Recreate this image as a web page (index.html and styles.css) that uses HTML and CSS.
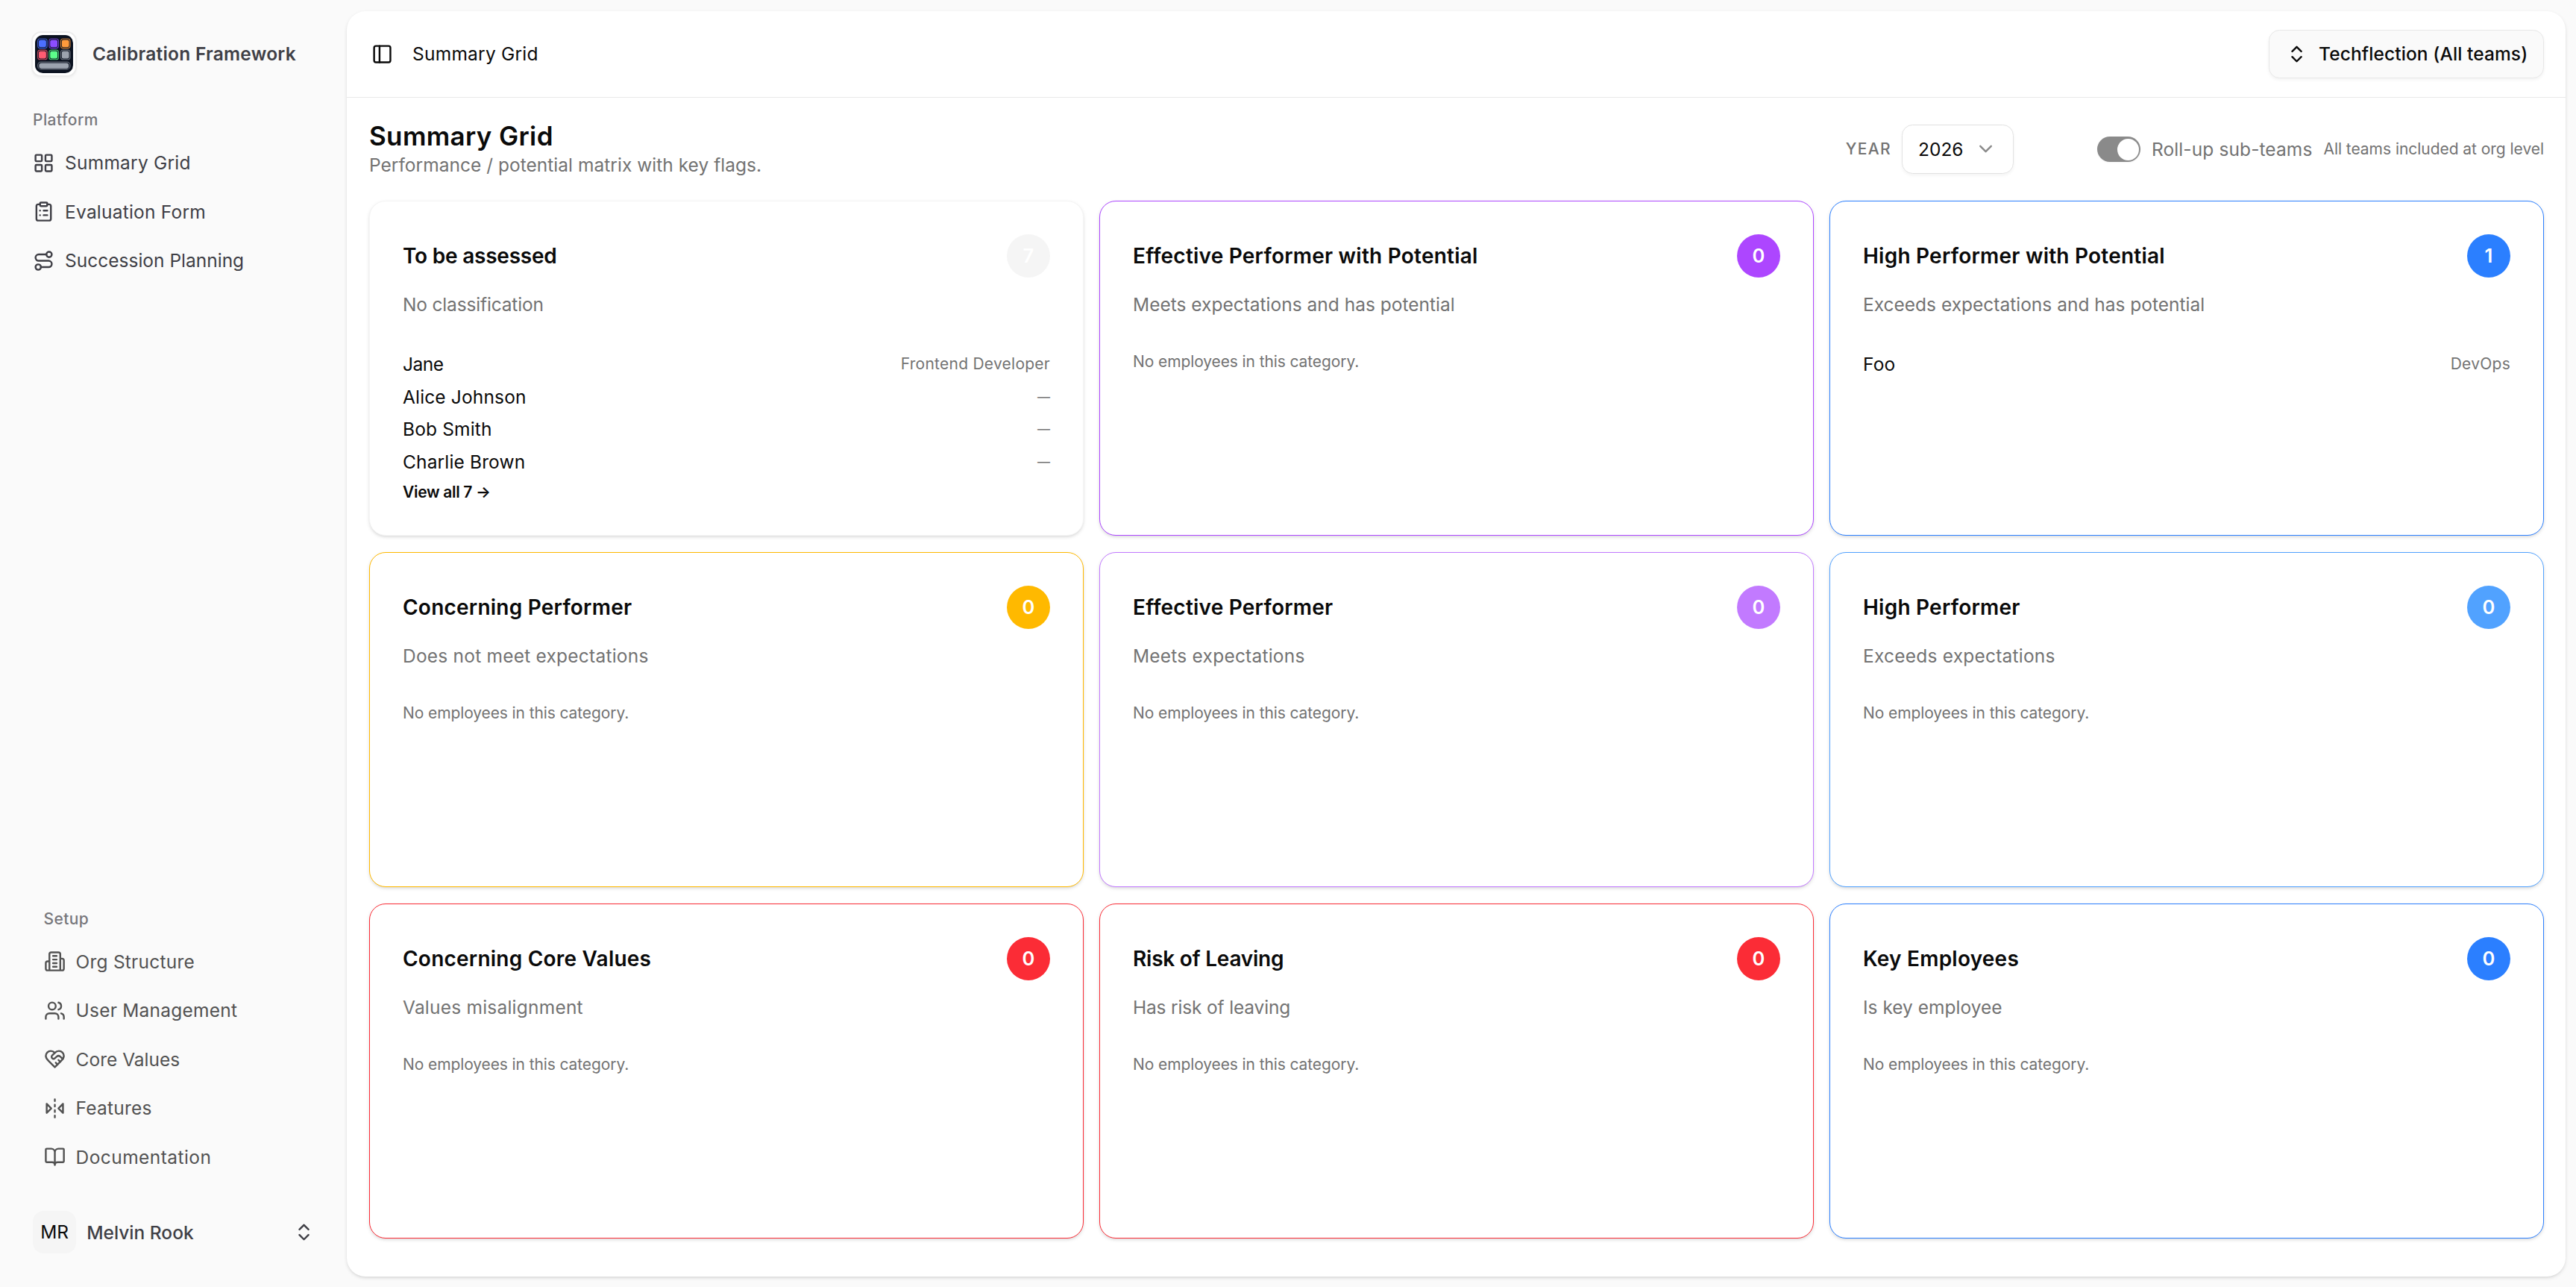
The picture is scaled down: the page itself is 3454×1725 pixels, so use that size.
FILE: index.html
```html
<!DOCTYPE html>
<html lang="en">
<head>
<meta charset="utf-8">
<title>Summary Grid</title>
<link rel="stylesheet" href="styles.css">
</head>
<body>
<div class="app">
  <aside class="sidebar">
    <div class="brand">
      <span class="brand-logo">
        <svg viewBox="0 0 154 154">
          <rect width="154" height="154" rx="32" fill="#0b1220"/>
          <g stroke-width="3.5">
            <g fill="#4c6fff" stroke="#4c6fff"><rect x="11" y="15" width="38" height="38" rx="10" fill="#0b1220" stroke-opacity=".75"/><rect x="17" y="21" width="26" height="26" rx="5"/></g>
            <g fill="#8b4dff" stroke="#8b4dff"><rect x="57" y="15" width="38" height="38" rx="10" fill="#0b1220" stroke-opacity=".75"/><rect x="63" y="21" width="26" height="26" rx="5"/></g>
            <g fill="#ff9a3c" stroke="#ff9a3c"><rect x="104" y="15" width="38" height="38" rx="10" fill="#0b1220" stroke-opacity=".75"/><rect x="110" y="21" width="26" height="26" rx="5"/></g>
            <g fill="#ff5c72" stroke="#ff5c72"><rect x="11" y="61" width="38" height="38" rx="10" fill="#0b1220" stroke-opacity=".75"/><rect x="17" y="67" width="26" height="26" rx="5"/></g>
            <g fill="#5cff8a" stroke="#5cff8a"><rect x="57" y="61" width="38" height="38" rx="10" fill="#0b1220" stroke-opacity=".75"/><rect x="63" y="67" width="26" height="26" rx="5"/></g>
            <g fill="#9ca3af" stroke="#9ca3af"><rect x="104" y="61" width="38" height="38" rx="10" fill="#0b1220" stroke-opacity=".6"/><rect x="110" y="67" width="26" height="26" rx="5"/></g>
            <g fill="#9ca3af" stroke="#9ca3af"><rect x="11" y="109" width="131" height="29" rx="13" fill="#0b1220" stroke-opacity=".6"/><rect x="18" y="115" width="117" height="18" rx="8"/></g>
          </g>
        </svg>
      </span>
      <span class="brand-name">Calibration Framework</span>
    </div>

    <nav class="nav nav-platform">
      <div class="nav-label">Platform</div>
      <a class="nav-item"><svg class="icon" viewBox="0 0 24 24"><rect width="7" height="7" x="3" y="3" rx="1"/><rect width="7" height="7" x="14" y="3" rx="1"/><rect width="7" height="7" x="14" y="14" rx="1"/><rect width="7" height="7" x="3" y="14" rx="1"/></svg>Summary Grid</a>
      <a class="nav-item"><svg class="icon" viewBox="0 0 24 24"><rect width="8" height="4" x="8" y="2" rx="1"/><path d="M16 4h2a2 2 0 0 1 2 2v14a2 2 0 0 1-2 2H6a2 2 0 0 1-2-2V6a2 2 0 0 1 2-2h2M12 11h4M12 16h4M8 11h.01M8 16h.01"/></svg>Evaluation Form</a>
      <a class="nav-item snug"><svg class="icon" viewBox="0 0 24 24"><circle cx="6" cy="19" r="3"/><path d="M9 19h8.5a3.5 3.5 0 0 0 0-7h-11a3.5 3.5 0 0 1 0-7H15"/><circle cx="18" cy="5" r="3"/></svg>Succession Planning</a>
    </nav>

    <nav class="nav nav-setup">
      <div class="nav-label">Setup</div>
      <a class="nav-item"><svg class="icon" viewBox="0 0 24 24"><path d="M6 22V4a2 2 0 0 1 2-2h8a2 2 0 0 1 2 2v18ZM6 12H4a2 2 0 0 0-2 2v6a2 2 0 0 0 2 2h2M18 9h2a2 2 0 0 1 2 2v9a2 2 0 0 1-2 2h-2M10 6h4M10 10h4M10 14h4M10 18h4"/></svg>Org Structure</a>
      <a class="nav-item"><svg class="icon" viewBox="0 0 24 24"><path d="M16 21v-2a4 4 0 0 0-4-4H6a4 4 0 0 0-4 4v2"/><circle cx="9" cy="7" r="4"/><path d="M22 21v-2a4 4 0 0 0-3-3.87M16 3.13a4 4 0 0 1 0 7.75"/></svg>User Management</a>
      <a class="nav-item snug"><svg class="icon" viewBox="0 0 24 24"><path d="M19 14c1.49-1.46 3-3.21 3-5.5A5.5 5.5 0 0 0 16.5 3c-1.76 0-3 .5-4.5 2-1.5-1.5-2.74-2-4.5-2A5.5 5.5 0 0 0 2 8.5c0 2.3 1.5 4.05 3 5.5l7 7Z"/><path d="M12 5 9.04 7.96a2.17 2.17 0 0 0 0 3.08c.82.82 2.13.85 3 .07l2.07-1.9a2.82 2.82 0 0 1 3.79 0l2.96 2.66M18 15l-2-2M15 18l-2-2"/></svg>Core Values</a>
      <a class="nav-item"><svg class="icon" viewBox="0 0 24 24"><path d="m3 7 5 5-5 5V7M21 7l-5 5 5 5V7M12 20v2M12 14v2M12 8v2M12 2v2"/></svg>Features</a>
      <a class="nav-item loose"><svg class="icon" viewBox="0 0 24 24"><path d="M12 7v14M3 18a1 1 0 0 1-1-1V4a1 1 0 0 1 1-1h5a4 4 0 0 1 4 4 4 4 0 0 1 4-4h5a1 1 0 0 1 1 1v13a1 1 0 0 1-1 1h-6a3 3 0 0 0-3 3 3 3 0 0 0-3-3z"/></svg>Documentation</a>
    </nav>

    <div class="user">
      <span class="avatar">MR</span>
      <span class="user-name">Melvin Rook</span>
      <svg class="icon" viewBox="0 0 24 24"><path d="m7 15 5 5 5-5M7 9l5-5 5 5"/></svg>
    </div>
  </aside>

  <main class="main">
    <header class="topbar">
      <svg class="icon" viewBox="0 0 24 24"><rect width="18" height="18" x="3" y="3" rx="2"/><path d="M9 3v18"/></svg>
      <span class="crumb">Summary Grid</span>
      <button class="team-button"><svg class="icon" viewBox="0 0 24 24"><path d="m7 15 5 5 5-5M7 9l5-5 5 5"/></svg>Techflection (All teams)</button>
    </header>

    <div class="page">
      <div class="page-head">
        <div class="heading">
          <h1>Summary Grid</h1>
          <p>Performance / potential matrix with key flags.</p>
        </div>
        <div class="filters">
          <span class="year-label">YEAR</span>
          <div class="select">2026<svg class="icon" viewBox="0 0 24 24"><path d="m6 9 6 6 6-6"/></svg></div>
          <div class="rollup">
            <span class="switch"><span class="thumb"></span></span>
            <span class="rollup-label">Roll-up sub-teams</span>
            <span class="rollup-note">All teams included at org level</span>
          </div>
        </div>
      </div>

      <div class="grid">
        <section class="card neutral">
          <div class="card-head"><h2 class="tight">To be assessed</h2><span class="badge">7</span></div>
          <p class="desc tight">No classification</p>
          <ul class="people">
            <li><span class="tight">Jane</span><span class="role">Frontend Developer</span></li>
            <li><span>Alice Johnson</span><span class="role none">—</span></li>
            <li><span>Bob Smith</span><span class="role none">—</span></li>
            <li><span>Charlie Brown</span><span class="role none">—</span></li>
          </ul>
          <a class="view-all">View all 7 →</a>
        </section>
        <section class="card purple">
          <div class="card-head"><h2>Effective Performer with Potential</h2><span class="badge">0</span></div>
          <p class="desc">Meets expectations and has potential</p>
          <p class="empty">No employees in this category.</p>
        </section>
        <section class="card blue">
          <div class="card-head"><h2>High Performer with Potential</h2><span class="badge">1</span></div>
          <p class="desc">Exceeds expectations and has potential</p>
          <ul class="people">
            <li><span>Foo</span><span class="role">DevOps</span></li>
          </ul>
        </section>
        <section class="card amber">
          <div class="card-head"><h2>Concerning Performer</h2><span class="badge">0</span></div>
          <p class="desc loose">Does not meet expectations</p>
          <p class="empty">No employees in this category.</p>
        </section>
        <section class="card light-purple">
          <div class="card-head"><h2>Effective Performer</h2><span class="badge">0</span></div>
          <p class="desc loose">Meets expectations</p>
          <p class="empty">No employees in this category.</p>
        </section>
        <section class="card light-blue">
          <div class="card-head"><h2>High Performer</h2><span class="badge">0</span></div>
          <p class="desc loose">Exceeds expectations</p>
          <p class="empty">No employees in this category.</p>
        </section>
        <section class="card red">
          <div class="card-head"><h2>Concerning Core Values</h2><span class="badge">0</span></div>
          <p class="desc loose">Values misalignment</p>
          <p class="empty">No employees in this category.</p>
        </section>
        <section class="card red">
          <div class="card-head"><h2 class="tight">Risk of Leaving</h2><span class="badge">0</span></div>
          <p class="desc tight">Has risk of leaving</p>
          <p class="empty">No employees in this category.</p>
        </section>
        <section class="card blue">
          <div class="card-head"><h2>Key Employees</h2><span class="badge">0</span></div>
          <p class="desc">Is key employee</p>
          <p class="empty">No employees in this category.</p>
        </section>
      </div>
    </div>
  </main>
</div>
</body>
</html>
```
FILE: styles.css
```css
* { box-sizing: border-box; margin: 0; padding: 0; }

html { font-size: 29.09px; }

body {
  background: #fafafa;
  color: #0a0a0a;
  font-family: Inter, "Liberation Sans", sans-serif;
  font-size: 24.5px;
  line-height: 36.4px;
  letter-spacing: 0.006em;
}

.app { display: flex; height: 100vh; overflow: hidden; }

.icon {
  width: 1rem;
  height: 1rem;
  flex: none;
  fill: none;
  stroke: currentColor;
  stroke-width: 2;
  stroke-linecap: round;
  stroke-linejoin: round;
}

/* Sidebar */
.sidebar {
  width: 465px;
  flex: none;
  display: flex;
  flex-direction: column;
  padding: 42px 0 44px 44px;
  color: #3f3f46;
}

.brand { display: flex; align-items: center; gap: 21px; margin-left: -2px; height: 61px; }
.brand-logo {
  width: 61px;
  height: 61px;
  padding: 3px;
  border: 2px solid #ececec;
  border-radius: 13px;
  background: #fff;
  box-shadow: 0 2px 3px rgba(0, 0, 0, 0.04);
}
.brand-logo svg { display: block; width: 51px; height: 51px; }
.brand-name { font-weight: 600; letter-spacing: 0.01em; line-height: 58px; padding-bottom: 2px; }

.nav { display: flex; flex-direction: column; gap: 7.27px; }
.nav-label {
  height: 58.2px;
  margin-bottom: -7.27px;
  line-height: 60.5px;
  font-size: 21px;
  font-weight: 500;
  letter-spacing: 0.02em;
  color: #77777c;
}
.nav-item { display: flex; align-items: center; gap: 14px; height: 58.2px; letter-spacing: 0.009em; }
.nav-item.snug { letter-spacing: 0; }
.nav-item.loose { letter-spacing: 0.018em; }
.nav-platform { margin-top: 28px; }
.nav-setup { margin-top: auto; padding-left: 14.5px; }
.nav-setup .nav-item { color: #525252; }

.user { display: flex; align-items: center; margin-top: 43px; height: 58.2px; padding-right: 42.5px; }
.avatar {
  width: 58.2px;
  height: 57px;
  border-radius: 14.5px;
  background: #f5f5f5;
  color: #0a0a0a;
  text-align: center;
  line-height: 57px;
  letter-spacing: 0;
}
.user-name { margin: 0 auto 0 14px; font-weight: 500; letter-spacing: 0; }

/* Content shell */
.main {
  flex: 1;
  margin: 15px 14px 14px 0;
  border-radius: 25px;
  background: #fff;
  box-shadow: 0 2px 5px rgba(0, 0, 0, 0.1), 0 2px 4px -2px rgba(0, 0, 0, 0.1);
}

.topbar {
  display: flex;
  align-items: center;
  height: 116px;
  padding: 0 29px 0 33px;
  border-bottom: 1px solid #e8e8e8;
}
.crumb { margin-left: 26px; margin-right: auto; letter-spacing: 0.009em; }
.team-button {
  display: flex;
  align-items: center;
  gap: 15px;
  height: 65px;
  width: 369px;
  padding-left: 22px;
  border: 1px solid #e8e8e8;
  border-radius: 14.5px;
  background: #fafafa;
  box-shadow: 0 2px 4px rgba(0, 0, 0, 0.05);
  color: inherit;
  font: inherit;
  font-weight: 500;
  letter-spacing: 0.004em;
  white-space: nowrap;
}

.page { padding: 36px 29px 0 30px; }
.page-head { display: flex; justify-content: space-between; height: 102px; }

h1 { margin-top: -3px; font-size: 35px; font-weight: 600; line-height: 36.4px; letter-spacing: 0.01em; }
.heading p { margin-top: 3px; color: #737373; letter-spacing: 0.001em; }

.filters { display: flex; align-items: center; height: 66px; }
.year-label { margin-right: 14px; font-size: 21px; font-weight: 500; letter-spacing: 0.065em; color: #737373; }
.select {
  display: flex;
  align-items: center;
  justify-content: space-between;
  width: 150px;
  height: 66px;
  padding: 0 22px 0 21px;
  border: 1px solid #e2e2e2;
  border-radius: 14.5px;
  box-shadow: 0 2px 4px rgba(0, 0, 0, 0.05);
  letter-spacing: 0;
}
.select .icon { color: #8a8a8a; }
.rollup { display: flex; align-items: center; margin-left: 112px; color: #737373; }
.switch {
  display: flex;
  justify-content: flex-end;
  align-items: center;
  width: 58px;
  height: 34px;
  margin-right: 15px;
  padding-right: 2px;
  border-radius: 17px;
  background: #8a8a8a;
  box-shadow: 0 1px 2px rgba(0, 0, 0, 0.05);
}
.thumb { width: 29px; height: 29px; border-radius: 50%; background: #fff; }
.rollup-label { margin-right: 15px; letter-spacing: 0.004em; }
.rollup-note { font-size: 21px; letter-spacing: -0.002em; }

/* Matrix */
.grid {
  display: grid;
  grid-template-columns: repeat(3, 1fr);
  grid-auto-rows: 449px;
  gap: 22px 21px;
}
.card {
  padding: 44px;
  border: 1px solid var(--tone);
  border-radius: 22px;
  background: #fff;
  box-shadow: 0 2px 5px rgba(0, 0, 0, 0.1), 0 2px 4px -2px rgba(0, 0, 0, 0.1);
}
.neutral { --tone: #f5f5f5; }
.purple { --tone: #ad46ff; }
.blue { --tone: #2b7fff; }
.amber { --tone: #ffb900; }
.light-purple { --tone: #c27aff; }
.light-blue { --tone: #51a2ff; }
.red { --tone: #fb2c36; }

.card-head { display: flex; align-items: center; justify-content: space-between; height: 58px; }
h2 { font-size: 28px; font-weight: 600; letter-spacing: 0.008em; }
h2.tight { letter-spacing: -0.008em; }
.badge {
  width: 58px;
  height: 58px;
  border-radius: 50%;
  background: var(--tone);
  color: #fff;
  font-size: 25.5px;
  font-weight: 600;
  line-height: 58px;
  text-align: center;
}
.desc { margin-top: 18px; color: #737373; letter-spacing: 0; }
.desc.tight { letter-spacing: -0.007em; }
.desc.loose { letter-spacing: 0.009em; }
.people { margin-top: 40px; list-style: none; }
.people li { display: flex; align-items: center; justify-content: space-between; height: 43.6px; }
.people .tight { letter-spacing: -0.02em; }
.role { font-size: 21px; letter-spacing: 0.012em; color: #737373; }
.role.none { font-size: 17px; letter-spacing: 0; }
.empty { margin-top: 41px; font-size: 21px; letter-spacing: -0.005em; color: #737373; }
.view-all { display: block; margin-top: 1px; font-size: 21px; font-weight: 600; letter-spacing: -0.015em; }
```
